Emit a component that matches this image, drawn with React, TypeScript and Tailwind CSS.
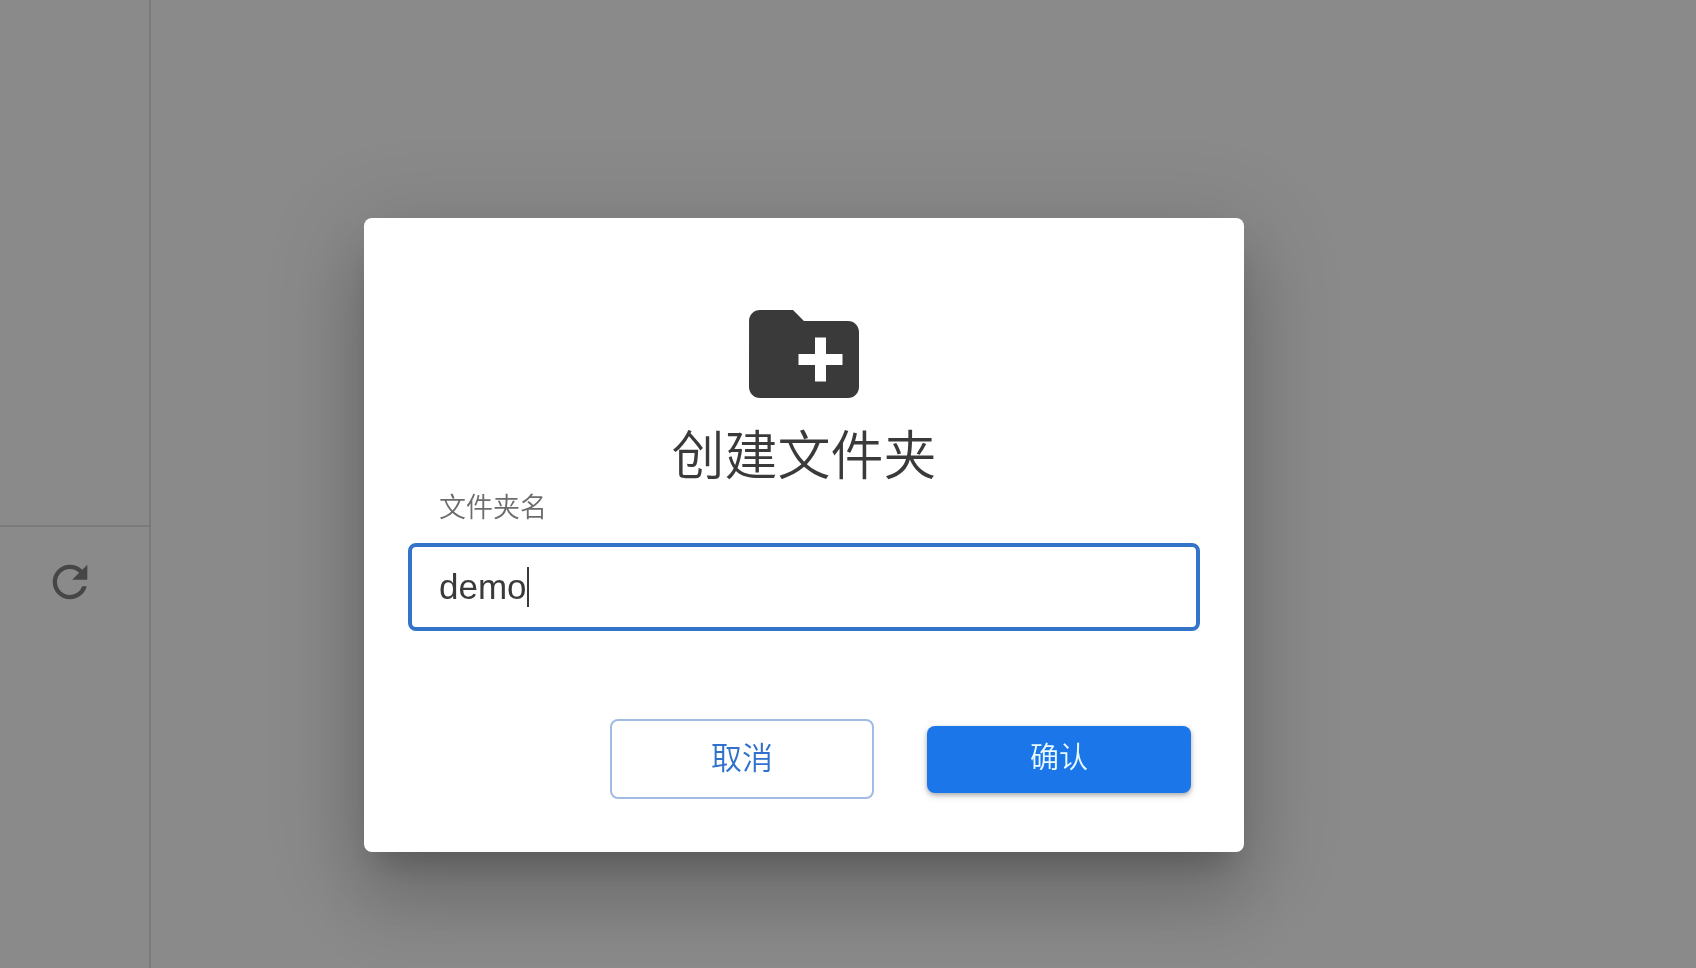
import { useState } from "react";
import { MdCreateNewFolder, MdRefresh } from "react-icons/md";

// Narrow rail on the left; the lower cell holds the reload action.
function Sidebar() {
  return (
    <aside className="flex w-[151px] shrink-0 flex-col border-r-2 border-[#7a7a7a]">
      <div className="h-[527px] border-b-2 border-[#7a7a7a]" />
      <div className="flex pt-[29px] pl-11">
        <button type="button" aria-label="刷新" className="text-[#464646]">
          <MdRefresh className="size-[52px]" />
        </button>
      </div>
    </aside>
  );
}

function CreateFolderDialog() {
  const [name, setName] = useState("demo");

  return (
    <form
      role="dialog"
      aria-labelledby="dialog-title"
      onSubmit={(e) => e.preventDefault()}
      className="flex w-full max-w-[880px] flex-col rounded-lg bg-white px-11 pt-[70px] pb-[53px] text-[#3a3a3a] shadow-[0_22px_30px_-14px_rgba(0,0,0,0.2),0_48px_76px_6px_rgba(0,0,0,0.14),0_18px_92px_16px_rgba(0,0,0,0.12)]"
    >
      <MdCreateNewFolder className="size-[132px] self-center" />
      <h1 id="dialog-title" className="text-center text-[53px] leading-[74px] font-[350]">
        创建文件夹
      </h1>

      <label htmlFor="folder-name" className="pl-[31px] text-[27px] leading-7 font-[350] text-[#6c6c6c]">
        文件夹名
      </label>
      <div className="relative mt-[21px]">
        <input
          id="folder-name"
          type="text"
          value={name}
          onChange={(e) => setName(e.target.value)}
          className="h-[88px] w-full rounded-lg border-4 border-[#3374ca] px-[27px] text-[35px] caret-transparent outline-none"
        />
        {/* caret sits right after the typed text */}
        <div aria-hidden="true" className="pointer-events-none absolute inset-y-0 left-[31px] flex items-center text-[35px]">
          <span className="invisible">{name}</span>
          <span className="h-10 w-0.5 bg-[#3a3a3a]" />
        </div>
      </div>

      <div className="mt-[88px] flex items-center justify-end gap-[53px] pr-[9px]">
        <button
          type="button"
          className="h-20 w-[264px] rounded-lg border-2 border-[#a0bce2] text-[31px] font-[350] text-[#2f71cc]"
        >
          取消
        </button>
        <button
          type="submit"
          className="h-[67px] w-[264px] rounded-lg bg-[#1b76ea] text-[29px] font-[350] text-[#e9fbff] shadow-[0_2px_4px_rgba(0,0,0,0.25),0_3px_8px_rgba(0,0,0,0.12)]"
        >
          确认
        </button>
      </div>
    </form>
  );
}

export default function App() {
  return (
    <div className="flex min-h-screen bg-[#8a8a8a] font-['Liberation_Sans','Noto_Sans_CJK_SC',sans-serif]">
      <Sidebar />
      <main className="flex-1" />
      <div className="fixed inset-0 flex items-start justify-center overflow-hidden pt-[218px] pr-[88px]">
        <CreateFolderDialog />
      </div>
    </div>
  );
}
